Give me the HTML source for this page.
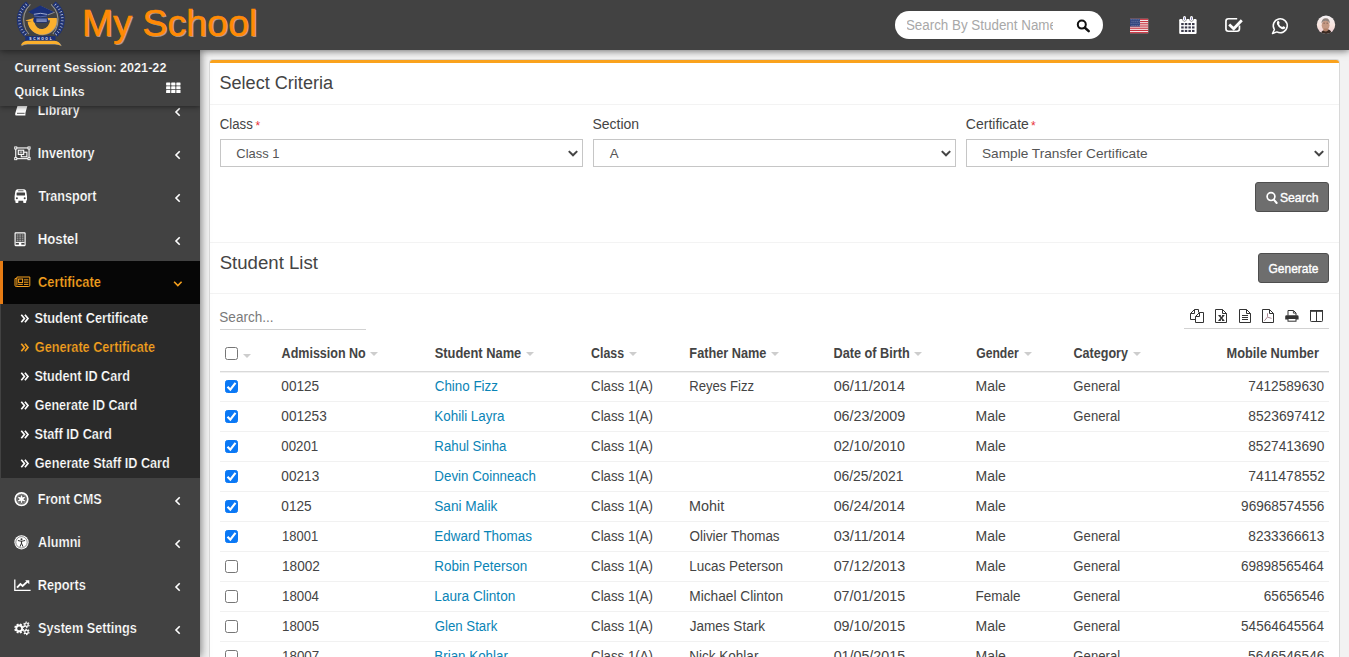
<!DOCTYPE html>
<html>
<head>
<meta charset="utf-8">
<title>Generate Certificate</title>
<style>
*{box-sizing:border-box;margin:0;padding:0}
html,body{width:1349px;height:657px;overflow:hidden}
body{font-family:"Liberation Sans",sans-serif;font-size:14px;color:#444;background:#f2f2f2;position:relative}
.tx{position:absolute;left:0;top:0;white-space:nowrap;line-height:1;transform-origin:0 0;display:block}
svg{position:absolute;overflow:visible}
/* header */
#hdr{position:absolute;left:0;top:0;width:1349px;height:50px;background:#424242;z-index:30;box-shadow:0 1px 7px rgba(0,0,0,.55)}
#title{position:absolute;left:83.3px;top:2.6px;line-height:1;font-size:35px;color:#ff8a05;letter-spacing:.85px;text-shadow:1px .6px 0 rgba(160,160,160,.8);white-space:nowrap;-webkit-text-stroke:.45px #ff8a05}
#sbox{position:absolute;left:895px;top:11px;width:208px;height:28px;border-radius:14px;background:#fff}
#sclip2{position:absolute;left:12px;top:0;width:146px;height:28px;overflow:hidden}
/* sidebar */
#side{position:absolute;left:0;top:50px;width:200px;height:607px;background:#424242;z-index:20;box-shadow:1px 0 8px rgba(0,0,0,.5)}
#sclip{position:absolute;left:0;top:0;width:200px;height:607px;overflow:hidden}
#sess{position:absolute;left:0;top:0;width:200px;height:55.5px;background:#424242;z-index:5;box-shadow:0 1px 5px rgba(0,0,0,.45)}
#act{position:absolute;left:0;top:211px;width:200px;height:43px;background:#060606;border-left:3px solid #e67c14}
#sub{position:absolute;left:1px;top:254px;width:199px;height:174px;background:#2a2a2a}
/* main */
#box{position:absolute;left:210px;top:60px;width:1129px;height:620px;background:#fff;border-top:3px solid #faa21c;border-radius:3px 3px 0 0;box-shadow:0 0 0 1px rgba(0,0,0,.095),0 0 2px rgba(0,0,0,.05)}
#main{position:absolute;left:0;top:0;width:1349px;height:657px;z-index:10}
.hl{position:absolute;left:210px;width:1129px;height:1px;background:#f3f3f3}
.star{position:absolute;color:#e8323a;font-size:12px;line-height:1;top:119.5px}
.sel{position:absolute;top:139px;width:363px;height:28px;border:1px solid #c6c6c6;background:#fff}
.btn{position:absolute;height:30px;background:#6e6e6e;border:1px solid #4e4e4e;border-radius:3px}
.ul{position:absolute;height:1px;background:#d2d2d2}
.so{position:absolute;top:352.2px;width:0;height:0;border-left:4.2px solid transparent;border-right:4.2px solid transparent;border-top:4.8px solid #cdcdcd}
.thb{position:absolute;left:220px;top:371px;width:1109px;height:2px;background:linear-gradient(#d9d9d9 50%,#f1f1f1 50%)}
.rb{position:absolute;left:220px;width:1109px;height:1px;background:#f1f1f1}
.cb{position:absolute;left:225px;width:13px;height:13px;border:1px solid #767676;border-radius:2.5px;background:#fff}
.cb.k{background:#0a78f5;border-color:#0a78f5}
.cb svg{left:-1px;top:-1px}
</style>
</head>
<body>
<div id="hdr">
<svg width="80" height="50" viewBox="0 0 80 50" style="left:0;top:0">
<path d="M30.4 4.3 Q21.5 13 24.2 25 Q25.4 30.5 28.8 34.2" fill="none" stroke="#929292" stroke-width="1.1"/>
<path d="M51.2 4.3 Q60.1 13 57.4 25 Q56.2 30.5 52.8 34.2" fill="none" stroke="#929292" stroke-width="1.1"/>
<path d="M27.6 3.4 Q16.6 12.5 20.2 26 Q21.8 31.2 26 34.8" fill="none" stroke="#1a3079" stroke-width="4.9" stroke-dasharray="2.6 .45"/>
<path d="M27.6 3.4 Q16.6 12.5 20.2 26 Q21.8 31.2 26 34.8" fill="none" stroke="#e4e9f8" stroke-width="2.6" stroke-dasharray=".7 2.35" stroke-dashoffset="-1.4" opacity=".85"/>
<path d="M54 3.4 Q65 12.5 61.4 26 Q59.8 31.2 55.6 34.8" fill="none" stroke="#1a3079" stroke-width="4.9" stroke-dasharray="2.6 .45"/>
<path d="M54 3.4 Q65 12.5 61.4 26 Q59.8 31.2 55.6 34.8" fill="none" stroke="#e4e9f8" stroke-width="2.6" stroke-dasharray=".7 2.35" stroke-dashoffset="-1.4" opacity=".85"/>
<path d="M27.6 21.5 A14.4 14 0 0 0 56.9 19.2 L56.9 18 L47 18 L47 20 L50.2 20 A8.2 9.6 0 0 1 34 22 Z" fill="#929292" transform="translate(.6 .5)"/>
<path d="M27.6 21.5 A14.4 14 0 0 0 56.7 19.2 L56.7 17.9 L47 17.9 L47 20 L50.1 20 A8.2 9.6 0 0 1 34 22 Z" fill="#fbb02d"/>
<path d="M25.5 20.4 L33.8 17.9 L33.8 22.4 Z" fill="#fbb02d"/><path d="M25.5 20.4 L27.6 19.8 L27.6 21 Z" fill="#d99a3a"/>
<rect x="33.3" y="17.6" width="14.8" height="5.2" rx="2.2" fill="#1a3079"/>
<path d="M36.4 19.1 L46.8 19.1 M36.4 20.25 L46.8 20.25 M36.4 21.4 L46.8 21.4" stroke="#cdd5ef" stroke-width=".6"/>
<path d="M40.3 5.6 L54.4 11.9 L47.5 14.8 L27.9 12.1 Z" fill="#929292" transform="translate(.8 .5)"/>
<path d="M40.3 5.5 L54.2 11.9 L47.4 14.6 L47.4 16.4 Q40.5 18.2 33.6 16.4 L33.6 14.4 L27.9 12.1 Z" fill="#1a3079"/>
<path d="M33.9 14.3 Q40.5 12.3 47.1 14.4" fill="none" stroke="#c3cce9" stroke-width=".8"/><path d="M34.2 16 Q40.5 17.5 46.8 16" fill="none" stroke="#8fa0d4" stroke-width=".5"/>
<rect x="25.3" y="36.1" width="30.2" height="4.7" fill="#1a3079"/>
<text x="30.4" y="39.7" font-family="Liberation Sans" font-weight="bold" font-size="3.3" fill="#fff" text-anchor="middle">S</text>
<text x="34.449999999999996" y="39.7" font-family="Liberation Sans" font-weight="bold" font-size="3.3" fill="#fff" text-anchor="middle">C</text>
<text x="38.5" y="39.7" font-family="Liberation Sans" font-weight="bold" font-size="3.3" fill="#fff" text-anchor="middle">H</text>
<text x="42.55" y="39.7" font-family="Liberation Sans" font-weight="bold" font-size="3.3" fill="#fff" text-anchor="middle">O</text>
<text x="46.599999999999994" y="39.7" font-family="Liberation Sans" font-weight="bold" font-size="3.3" fill="#fff" text-anchor="middle">O</text>
<text x="50.65" y="39.7" font-family="Liberation Sans" font-weight="bold" font-size="3.3" fill="#fff" text-anchor="middle">L</text>
<path d="M20.8 45.9 Q22 41.2 27 40.8 L54.4 40.8 Q59.4 41.2 61 45.9 Q58.6 44.2 54.4 44.2 L27 44.2 Q22.8 44.2 20.8 45.9 Z" fill="#929292" transform="translate(.8 .4)"/>
<path d="M20.8 45.7 Q22 41.1 27 40.7 L54.4 40.7 Q59.4 41.1 60.9 45.7 Q58.6 44 54.4 44 L27 44 Q22.8 44 20.8 45.7 Z" fill="#fbb02d"/>
</svg>
<span class="tx" style="font-size:36.5px;color:#ff8a05;transform:translate(81.96px,6px) scaleX(1.0297);-webkit-text-stroke:0.680px #ff8a05;text-shadow:1.1px .7px 0 rgba(165,165,165,.85)">My School</span>
  <div id="sbox"><div id="sclip2">
<span class="tx" style="font-size:14px;color:#a8a8a8;transform:translate(-1.09px,7px) scaleX(0.9560)">Search By Student Name</span>
</div></div>
<svg width="1349" height="50" viewBox="0 0 1349 50" style="left:0;top:0">
<circle cx="1081.8" cy="24.6" r="4" fill="none" stroke="#111" stroke-width="2"/><line x1="1084.9" y1="27.7" x2="1088.7" y2="31.1" stroke="#111" stroke-width="2.5" stroke-linecap="round"/>
<rect x="1130" y="18.8" width="18.2" height="14.4" fill="#f4e9ea"/>
<rect x="1130" y="18.80" width="18.2" height="1.11" fill="#c8303c"/>
<rect x="1130" y="21.02" width="18.2" height="1.11" fill="#c8303c"/>
<rect x="1130" y="23.23" width="18.2" height="1.11" fill="#c8303c"/>
<rect x="1130" y="25.45" width="18.2" height="1.11" fill="#c8303c"/>
<rect x="1130" y="27.66" width="18.2" height="1.11" fill="#c8303c"/>
<rect x="1130" y="29.88" width="18.2" height="1.11" fill="#c8303c"/>
<rect x="1130" y="32.09" width="18.2" height="1.11" fill="#c8303c"/>
<rect x="1130" y="18.8" width="10" height="7.75" fill="#33467f"/>
<circle cx="1131.10" cy="19.80" r=".45" fill="#aab3d0"/>
<circle cx="1133.05" cy="19.80" r=".45" fill="#aab3d0"/>
<circle cx="1135.00" cy="19.80" r=".45" fill="#aab3d0"/>
<circle cx="1136.95" cy="19.80" r=".45" fill="#aab3d0"/>
<circle cx="1138.90" cy="19.80" r=".45" fill="#aab3d0"/>
<circle cx="1132.00" cy="21.70" r=".45" fill="#aab3d0"/>
<circle cx="1133.95" cy="21.70" r=".45" fill="#aab3d0"/>
<circle cx="1135.90" cy="21.70" r=".45" fill="#aab3d0"/>
<circle cx="1137.85" cy="21.70" r=".45" fill="#aab3d0"/>
<circle cx="1139.80" cy="21.70" r=".45" fill="#aab3d0"/>
<circle cx="1131.10" cy="23.60" r=".45" fill="#aab3d0"/>
<circle cx="1133.05" cy="23.60" r=".45" fill="#aab3d0"/>
<circle cx="1135.00" cy="23.60" r=".45" fill="#aab3d0"/>
<circle cx="1136.95" cy="23.60" r=".45" fill="#aab3d0"/>
<circle cx="1138.90" cy="23.60" r=".45" fill="#aab3d0"/>
<circle cx="1132.00" cy="25.50" r=".45" fill="#aab3d0"/>
<circle cx="1133.95" cy="25.50" r=".45" fill="#aab3d0"/>
<circle cx="1135.90" cy="25.50" r=".45" fill="#aab3d0"/>
<circle cx="1137.85" cy="25.50" r=".45" fill="#aab3d0"/>
<circle cx="1139.80" cy="25.50" r=".45" fill="#aab3d0"/>
<path d="M1180.4 19 L1195.4 19 Q1196.6 19 1196.6 20.2 L1196.6 32.8 Q1196.6 34 1195.4 34 L1180.4 34 Q1179.2 34 1179.2 32.8 L1179.2 20.2 Q1179.2 19 1180.4 19 Z" fill="#fff"/>
<rect x="1182.45" y="15.4" width="4.1" height="6.2" rx="2" fill="#424242"/><rect x="1183" y="15.9" width="3" height="5.2" rx="1.5" fill="#fff"/><rect x="1184.05" y="17" width=".9" height="3" rx=".4" fill="#7a7ab8"/>
<rect x="1189.45" y="15.4" width="4.1" height="6.2" rx="2" fill="#424242"/><rect x="1190" y="15.9" width="3" height="5.2" rx="1.5" fill="#fff"/><rect x="1191.05" y="17" width=".9" height="3" rx=".4" fill="#7a7ab8"/>
<rect x="1181.2" y="23" width="2.5" height="2.1" fill="#3c3c4c"/>
<rect x="1184.8" y="23" width="2.5" height="2.1" fill="#3c3c4c"/>
<rect x="1188.4" y="23" width="2.5" height="2.1" fill="#3c3c4c"/>
<rect x="1192" y="23" width="2.5" height="2.1" fill="#3c3c4c"/>
<rect x="1181.2" y="26.4" width="2.5" height="2.1" fill="#3c3c4c"/>
<rect x="1184.8" y="26.4" width="2.5" height="2.1" fill="#3c3c4c"/>
<rect x="1188.4" y="26.4" width="2.5" height="2.1" fill="#3c3c4c"/>
<rect x="1192" y="26.4" width="2.5" height="2.1" fill="#3c3c4c"/>
<rect x="1181.2" y="29.9" width="2.5" height="2.1" fill="#3c3c4c"/>
<rect x="1184.8" y="29.9" width="2.5" height="2.1" fill="#3c3c4c"/>
<rect x="1188.4" y="29.9" width="2.5" height="2.1" fill="#3c3c4c"/>
<rect x="1192" y="29.9" width="2.5" height="2.1" fill="#3c3c4c"/>
<path d="M1237.2 18.75 L1228.4 18.75 Q1225.95 18.75 1225.95 21.2 L1225.95 28.8 Q1225.95 31.25 1228.4 31.25 L1237 31.25 Q1239.45 31.25 1239.45 28.8 L1239.45 25.6" fill="none" stroke="#fff" stroke-width="1.7"/>
<polyline points="1229.2,24.4 1233.7,28.7 1241.8,20.2" fill="none" stroke="#fff" stroke-width="2.8"/>
<path d="M1274.4 29.6 A7 7 0 1 1 1276.9 31.9 L1272.5 33.5 Z" fill="none" stroke="#fff" stroke-width="1.5" stroke-linejoin="round"/>
<path d="M1277.4 21.2 Q1278.3 20.3 1279 21.4 L1279.6 22.7 Q1279.7 23.3 1279 23.9 Q1279.9 26.2 1282.3 27 Q1283 26 1283.6 26.2 L1285 26.9 Q1285.6 27.4 1284.9 28.4 Q1283.6 29.6 1281.6 28.9 Q1278.3 27.6 1277 24.2 Q1276.5 22.3 1277.4 21.2 Z" fill="#fff"/>
<defs><clipPath id="av"><circle cx="1326" cy="24.8" r="9.2"/></clipPath><linearGradient id="avg" x1="0" y1="0" x2="0" y2="1"><stop offset="0" stop-color="#f4f2f6"/><stop offset=".55" stop-color="#f8e3dc"/><stop offset=".8" stop-color="#f1d3d6"/><stop offset="1" stop-color="#b8d4e4"/></linearGradient></defs>
<g clip-path="url(#av)"><rect x="1316" y="15" width="20" height="20" fill="url(#avg)"/><path d="M1320.5 35 Q1321 30.6 1324.4 30 L1328.4 29.6 Q1331.6 30.4 1332 35 Z" fill="#3a2a22"/><ellipse cx="1325.6" cy="25.2" rx="3.9" ry="4.9" fill="#c49883"/><path d="M1321.5 23.6 Q1321.4 18.4 1325.8 18.3 Q1330 18.4 1329.8 23.6 Q1328.6 20.6 1325.6 20.8 Q1322.6 20.6 1321.5 23.6 Z" fill="#8d817c"/><path d="M1323.4 23.2 L1324.9 23.2 M1326.5 23.2 L1328 23.2" stroke="#6a5048" stroke-width=".7"/><path d="M1323.2 30.4 Q1325.6 32.6 1328.2 30.2 L1327.6 28.6 L1323.8 28.6 Z" fill="#b08068"/></g>
</svg>
</div>
<div id="side">
 <div id="sclip">
  <div id="sess">
<span class="tx" style="font-size:13px;color:#fff;transform:translate(14.49px,11px) scaleX(0.9736);font-weight:bold;-webkit-text-stroke:0.226px #424242">Current Session: 2021-22</span>
<span class="tx" style="font-size:13px;color:#fff;transform:translate(14.50px,35px) scaleX(0.9527);font-weight:bold;-webkit-text-stroke:0.231px #424242">Quick Links</span>
<svg width="200" height="56" viewBox="0 50 200 56" style="left:0;top:0">
<rect x="166.1" y="82.5" width="4.2" height="3" rx=".4" fill="#fff"/>
<rect x="166.1" y="86.3" width="4.2" height="3" rx=".4" fill="#fff"/>
<rect x="166.1" y="90.1" width="4.2" height="3" rx=".4" fill="#fff"/>
<rect x="171.2" y="82.5" width="4.2" height="3" rx=".4" fill="#fff"/>
<rect x="171.2" y="86.3" width="4.2" height="3" rx=".4" fill="#fff"/>
<rect x="171.2" y="90.1" width="4.2" height="3" rx=".4" fill="#fff"/>
<rect x="176.3" y="82.5" width="4.2" height="3" rx=".4" fill="#fff"/>
<rect x="176.3" y="86.3" width="4.2" height="3" rx=".4" fill="#fff"/>
<rect x="176.3" y="90.1" width="4.2" height="3" rx=".4" fill="#fff"/>
</svg>
  </div>
  <div id="act"></div>
  <div id="sub"></div>
<span class="tx" style="font-size:14px;color:#fff;transform:translate(37.72px,53px) scaleX(0.8798);font-weight:bold;-webkit-text-stroke:0.250px #424242">Library</span>
<span class="tx" style="font-size:14px;color:#fff;transform:translate(37.72px,96px) scaleX(0.8999);font-weight:bold;-webkit-text-stroke:0.244px #424242">Inventory</span>
<span class="tx" style="font-size:14px;color:#fff;transform:translate(38.40px,139px) scaleX(0.8990);font-weight:bold;-webkit-text-stroke:0.245px #424242">Transport</span>
<span class="tx" style="font-size:14px;color:#fff;transform:translate(37.65px,182px) scaleX(0.9448);font-weight:bold;-webkit-text-stroke:0.233px #424242">Hostel</span>
<span class="tx" style="font-size:14px;color:#f5a01e;transform:translate(37.99px,225px) scaleX(0.9185);font-weight:bold;-webkit-text-stroke:0.240px #060606">Certificate</span>
<span class="tx" style="font-size:14px;color:#fff;transform:translate(37.66px,442px) scaleX(0.9040);font-weight:bold;-webkit-text-stroke:0.243px #424242">Front CMS</span>
<span class="tx" style="font-size:14px;color:#fff;transform:translate(38.09px,485px) scaleX(0.9012);font-weight:bold;-webkit-text-stroke:0.244px #424242">Alumni</span>
<span class="tx" style="font-size:14px;color:#fff;transform:translate(37.66px,528px) scaleX(0.9118);font-weight:bold;-webkit-text-stroke:0.241px #424242">Reports</span>
<span class="tx" style="font-size:14px;color:#fff;transform:translate(38.04px,571px) scaleX(0.9070);font-weight:bold;-webkit-text-stroke:0.243px #424242">System Settings</span>
<span class="tx" style="font-size:14px;color:#fff;transform:translate(34.46px,261px) scaleX(0.9141);font-weight:bold;-webkit-text-stroke:0.241px #2a2a2a">Student Certificate</span>
<span class="tx" style="font-size:14px;color:#f5a01e;transform:translate(34.78px,290px) scaleX(0.9041);font-weight:bold;-webkit-text-stroke:0.243px #2a2a2a">Generate Certificate</span>
<span class="tx" style="font-size:14px;color:#fff;transform:translate(34.45px,319px) scaleX(0.9020);font-weight:bold;-webkit-text-stroke:0.244px #2a2a2a">Student ID Card</span>
<span class="tx" style="font-size:14px;color:#fff;transform:translate(34.74px,348px) scaleX(0.8949);font-weight:bold;-webkit-text-stroke:0.246px #2a2a2a">Generate ID Card</span>
<span class="tx" style="font-size:14px;color:#fff;transform:translate(34.39px,377px) scaleX(0.9122);font-weight:bold;-webkit-text-stroke:0.241px #2a2a2a">Staff ID Card</span>
<span class="tx" style="font-size:14px;color:#fff;transform:translate(34.78px,406px) scaleX(0.9034);font-weight:bold;-webkit-text-stroke:0.244px #2a2a2a">Generate Staff ID Card</span>
<svg width="200" height="607" viewBox="0 50 200 607" style="left:0;top:0">
<polyline points="179.7,108.3 176,112.0 179.7,115.7" fill="none" stroke="#fff" stroke-width="1.6"/>
<polyline points="179.7,151.3 176,155.0 179.7,158.7" fill="none" stroke="#fff" stroke-width="1.6"/>
<polyline points="179.7,194.3 176,198.0 179.7,201.7" fill="none" stroke="#fff" stroke-width="1.6"/>
<polyline points="179.7,237.3 176,241.0 179.7,244.7" fill="none" stroke="#fff" stroke-width="1.6"/>
<polyline points="179.7,497.3 176,501.0 179.7,504.7" fill="none" stroke="#fff" stroke-width="1.6"/>
<polyline points="179.7,540.3 176,544.0 179.7,547.7" fill="none" stroke="#fff" stroke-width="1.6"/>
<polyline points="179.7,583.3 176,587.0 179.7,590.7" fill="none" stroke="#fff" stroke-width="1.6"/>
<polyline points="179.7,626.3 176,630.0 179.7,633.7" fill="none" stroke="#fff" stroke-width="1.6"/>
<polyline points="174.1,281.7 177.85,285.5 181.6,281.7" fill="none" stroke="#f5a01e" stroke-width="1.6"/>
<polyline points="21.3,314.8 24.4,318.5 21.3,322.2" fill="none" stroke="#fff" stroke-width="1.7"/>
<polyline points="24.9,314.8 28.0,318.5 24.9,322.2" fill="none" stroke="#fff" stroke-width="1.7"/>
<polyline points="21.3,343.8 24.4,347.5 21.3,351.2" fill="none" stroke="#f5a01e" stroke-width="1.7"/>
<polyline points="24.9,343.8 28.0,347.5 24.9,351.2" fill="none" stroke="#f5a01e" stroke-width="1.7"/>
<polyline points="21.3,372.8 24.4,376.5 21.3,380.2" fill="none" stroke="#fff" stroke-width="1.7"/>
<polyline points="24.9,372.8 28.0,376.5 24.9,380.2" fill="none" stroke="#fff" stroke-width="1.7"/>
<polyline points="21.3,401.8 24.4,405.5 21.3,409.2" fill="none" stroke="#fff" stroke-width="1.7"/>
<polyline points="24.9,401.8 28.0,405.5 24.9,409.2" fill="none" stroke="#fff" stroke-width="1.7"/>
<polyline points="21.3,430.8 24.4,434.5 21.3,438.2" fill="none" stroke="#fff" stroke-width="1.7"/>
<polyline points="24.9,430.8 28.0,434.5 24.9,438.2" fill="none" stroke="#fff" stroke-width="1.7"/>
<polyline points="21.3,459.8 24.4,463.5 21.3,467.2" fill="none" stroke="#fff" stroke-width="1.7"/>
<polyline points="24.9,459.8 28.0,463.5 24.9,467.2" fill="none" stroke="#fff" stroke-width="1.7"/>
<path d="M18.2 103.5 L28 103.5 L25.4 113 L25.4 115.6 L16.6 115.6 Q14.6 115.6 15.2 113.4 Z" fill="#fff"/><path d="M17 113.3 L24.6 113.3" stroke="#424242" stroke-width=".9"/>
<rect x="15.75" y="147.95" width="13.3" height="10.7" fill="none" stroke="#fff" stroke-width="1.1"/>
<rect x="14.7" y="146.89999999999998" width="2.1" height="2.1" fill="#424242" stroke="#fff" stroke-width=".9"/>
<rect x="28.0" y="146.89999999999998" width="2.1" height="2.1" fill="#424242" stroke="#fff" stroke-width=".9"/>
<rect x="14.7" y="157.6" width="2.1" height="2.1" fill="#424242" stroke="#fff" stroke-width=".9"/>
<rect x="28.0" y="157.6" width="2.1" height="2.1" fill="#424242" stroke="#fff" stroke-width=".9"/>
<rect x="21.3" y="152.2" width="5.6" height="4.6" fill="none" stroke="#fff" stroke-width="1.1"/>
<rect x="18.3" y="150.2" width="5.4" height="4.2" fill="#424242" stroke="#fff" stroke-width="1.1"/>
<rect x="19.6" y="151.3" width="2.8" height="2" fill="#fff" opacity=".55"/>
<path d="M17.4 189.3 L24.2 189.3 Q26 189.6 26.3 191.4 L27 196.2 L27 200.6 L26.2 200.6 L26.2 202.2 Q26.2 203 25.4 203 L24 203 Q23.2 203 23.2 202.2 L23.2 200.8 L18.4 200.8 L18.4 202.2 Q18.4 203 17.6 203 L16.2 203 Q15.4 203 15.4 202.2 L15.4 200.6 L14.6 200.6 L14.6 196.2 L15.3 191.4 Q15.6 189.6 17.4 189.3 Z" fill="#fff"/>
<rect x="16.6" y="192.4" width="8.4" height="3.2" rx=".5" fill="#424242"/><rect x="18" y="190.3" width="5.6" height="1" rx=".5" fill="#424242" opacity=".8"/>
<circle cx="16.9" cy="198.2" r="1" fill="#424242"/><circle cx="24.7" cy="198.2" r="1" fill="#424242"/>
<rect x="15.1" y="232.8" width="10" height="12.8" rx=".5" fill="none" stroke="#fff" stroke-width="1.15"/>
<rect x="16.7" y="234.4" width="1.8" height="1.2" fill="#fff" opacity=".5"/>
<rect x="19.2" y="234.4" width="1.8" height="1.2" fill="#fff" opacity=".5"/>
<rect x="21.7" y="234.4" width="1.8" height="1.2" fill="#fff" opacity=".5"/>
<rect x="16.7" y="236.3" width="1.8" height="1.2" fill="#fff" opacity=".5"/>
<rect x="19.2" y="236.3" width="1.8" height="1.2" fill="#fff" opacity=".5"/>
<rect x="21.7" y="236.3" width="1.8" height="1.2" fill="#fff" opacity=".5"/>
<rect x="16.7" y="238.2" width="1.8" height="1.2" fill="#fff" opacity=".5"/>
<rect x="19.2" y="238.2" width="1.8" height="1.2" fill="#fff" opacity=".5"/>
<rect x="21.7" y="238.2" width="1.8" height="1.2" fill="#fff" opacity=".5"/>
<rect x="16.7" y="240.1" width="1.8" height="1.2" fill="#fff" opacity=".5"/>
<rect x="19.2" y="240.1" width="1.8" height="1.2" fill="#fff" opacity=".5"/>
<rect x="21.7" y="240.1" width="1.8" height="1.2" fill="#fff" opacity=".5"/>
<rect x="15.6" y="241.9" width="9" height="1" fill="#fff"/><rect x="18.9" y="242.4" width="2.4" height="3" fill="#fff"/><rect x="15.6" y="244.4" width="9" height=".8" fill="#fff" opacity=".6"/>
<path d="M16.9 277 L29.8 277 L29.8 285.3 Q29.8 286.5 28.6 286.5 L16.2 286.5 Q15 286.5 15 285.3 L15 278.6 L16.9 278.6" fill="none" stroke="#f5a01e" stroke-width="1"/><path d="M16.9 277 L16.9 285.6" stroke="#f5a01e" stroke-width="1"/>
<rect x="18.6" y="279" width="4" height="3.6" fill="none" stroke="#f5a01e" stroke-width="1"/><rect x="19.7" y="280" width="1.8" height="1.6" fill="#060606"/>
<path d="M24 279.4 L28.4 279.4 M24 281 L28.4 281 M24 282.5 L28.4 282.5" stroke="#f5a01e" stroke-width=".9" opacity=".8"/><path d="M18.2 284.4 L22.8 284.4 M24 284.4 L28.4 284.4" stroke="#f5a01e" stroke-width="1"/>
<circle cx="21.5" cy="499.1" r="6.3" fill="none" stroke="#fff" stroke-width="1.7"/><circle cx="21.5" cy="499.1" r="5.1" fill="#fff" opacity=".4"/>
<polygon points="25.40,501.35 21.50,503.60 17.60,501.35 17.60,496.85 21.50,494.60 25.40,496.85" fill="#424242"/>
<line x1="21.50" y1="495.40" x2="21.50" y2="502.80" stroke="#fff" stroke-width="1.6"/>
<line x1="24.70" y1="497.25" x2="18.30" y2="500.95" stroke="#fff" stroke-width="1.6"/>
<line x1="24.70" y1="500.95" x2="18.30" y2="497.25" stroke="#fff" stroke-width="1.6"/>
<circle cx="21.5" cy="499.1" r="1.8" fill="#fff"/>
<circle cx="21.5" cy="542.3" r="7.1" fill="#fff"/><circle cx="21.5" cy="542.3" r="5.7" fill="none" stroke="#424242" stroke-width=".6"/>
<circle cx="21.5" cy="539.2" r="1" fill="#333"/><path d="M18.3 540.6 L21.5 541.3 L24.7 540.6 M21.5 541.3 L21.5 543.4 M21.5 543.2 L20.1 546.4 M21.5 543.2 L22.9 546.4" stroke="#333" stroke-width="1" fill="none" stroke-linecap="round"/>
<path d="M14.8 579.4 L14.8 590.4 L30.6 590.4" fill="none" stroke="#fff" stroke-width="1.3"/><path d="M17 587.6 L20.4 584 L22.6 586 L27.6 581.4" fill="none" stroke="#fff" stroke-width="1.9"/><path d="M25.2 580.2 L29.3 580.2 L29.3 584.3 Z" fill="#fff"/>
<line x1="22.43" y1="629.74" x2="23.82" y2="630.31" stroke="#fff" stroke-width="2.0"/>
<line x1="20.54" y1="631.63" x2="21.11" y2="633.02" stroke="#fff" stroke-width="2.0"/>
<line x1="17.86" y1="631.63" x2="17.29" y2="633.02" stroke="#fff" stroke-width="2.0"/>
<line x1="15.97" y1="629.74" x2="14.58" y2="630.31" stroke="#fff" stroke-width="2.0"/>
<line x1="15.97" y1="627.06" x2="14.58" y2="626.49" stroke="#fff" stroke-width="2.0"/>
<line x1="17.86" y1="625.17" x2="17.29" y2="623.78" stroke="#fff" stroke-width="2.0"/>
<line x1="20.54" y1="625.17" x2="21.11" y2="623.78" stroke="#fff" stroke-width="2.0"/>
<line x1="22.43" y1="627.06" x2="23.82" y2="626.49" stroke="#fff" stroke-width="2.0"/>
<circle cx="19.2" cy="628.4" r="3.80" fill="#fff"/><circle cx="19.2" cy="628.4" r="1.9" fill="#424242"/>
<line x1="28.35" y1="625.47" x2="29.46" y2="625.92" stroke="#fff" stroke-width="1.5"/>
<line x1="26.76" y1="626.68" x2="26.92" y2="627.87" stroke="#fff" stroke-width="1.5"/>
<line x1="24.91" y1="625.92" x2="23.96" y2="626.65" stroke="#fff" stroke-width="1.5"/>
<line x1="24.65" y1="623.93" x2="23.54" y2="623.48" stroke="#fff" stroke-width="1.5"/>
<line x1="26.24" y1="622.72" x2="26.08" y2="621.53" stroke="#fff" stroke-width="1.5"/>
<line x1="28.09" y1="623.48" x2="29.04" y2="622.75" stroke="#fff" stroke-width="1.5"/>
<circle cx="26.5" cy="624.7" r="2.30" fill="#fff"/><circle cx="26.5" cy="624.7" r="1.1" fill="#424242"/>
<line x1="28.35" y1="632.67" x2="29.46" y2="633.12" stroke="#fff" stroke-width="1.5"/>
<line x1="26.76" y1="633.88" x2="26.92" y2="635.07" stroke="#fff" stroke-width="1.5"/>
<line x1="24.91" y1="633.12" x2="23.96" y2="633.85" stroke="#fff" stroke-width="1.5"/>
<line x1="24.65" y1="631.13" x2="23.54" y2="630.68" stroke="#fff" stroke-width="1.5"/>
<line x1="26.24" y1="629.92" x2="26.08" y2="628.73" stroke="#fff" stroke-width="1.5"/>
<line x1="28.09" y1="630.68" x2="29.04" y2="629.95" stroke="#fff" stroke-width="1.5"/>
<circle cx="26.5" cy="631.9" r="2.30" fill="#fff"/><circle cx="26.5" cy="631.9" r="1.1" fill="#424242"/>
</svg>
 </div>
</div>
<div id="box"></div>
<div id="main">
  <div class="hl" style="top:104px"></div>
  <div class="hl" style="top:242px"></div>
  <div class="hl" style="top:293px"></div>
  <span class="star" style="left:255.5px">*</span>
  <span class="star" style="left:1031px">*</span>
  <div class="sel" style="left:220px"></div>
  <div class="sel" style="left:593px"></div>
  <div class="sel" style="left:966px"></div>
  <div class="btn" style="left:1255px;top:182px;width:74px"></div>
  <div class="btn" style="left:1258px;top:253px;width:71px"></div>
  <div class="ul" style="left:220px;top:329px;width:146px"></div>
  <div class="ul" style="left:1184px;top:328px;width:145px"></div>
<i class="so" style="left:370.2px"></i>
<i class="so" style="left:525.8px"></i>
<i class="so" style="left:628.7px"></i>
<i class="so" style="left:771.1px"></i>
<i class="so" style="left:914.0px"></i>
<i class="so" style="left:1023.6px"></i>
<i class="so" style="left:1132.8px"></i>
<i class="so" style="left:243px;top:353.9px"></i>
<div class="thb"></div>
<div class="rb" style="top:401px"></div>
<div class="cb k" style="top:380px"><svg width="13" height="13" viewBox="0 0 13 13"><path d="M2.5 6.8 L5.3 9.6 L10.5 2.8" fill="none" stroke="#fff" stroke-width="2.2"/></svg></div>
<div class="rb" style="top:431px"></div>
<div class="cb k" style="top:410px"><svg width="13" height="13" viewBox="0 0 13 13"><path d="M2.5 6.8 L5.3 9.6 L10.5 2.8" fill="none" stroke="#fff" stroke-width="2.2"/></svg></div>
<div class="rb" style="top:461px"></div>
<div class="cb k" style="top:440px"><svg width="13" height="13" viewBox="0 0 13 13"><path d="M2.5 6.8 L5.3 9.6 L10.5 2.8" fill="none" stroke="#fff" stroke-width="2.2"/></svg></div>
<div class="rb" style="top:491px"></div>
<div class="cb k" style="top:470px"><svg width="13" height="13" viewBox="0 0 13 13"><path d="M2.5 6.8 L5.3 9.6 L10.5 2.8" fill="none" stroke="#fff" stroke-width="2.2"/></svg></div>
<div class="rb" style="top:521px"></div>
<div class="cb k" style="top:500px"><svg width="13" height="13" viewBox="0 0 13 13"><path d="M2.5 6.8 L5.3 9.6 L10.5 2.8" fill="none" stroke="#fff" stroke-width="2.2"/></svg></div>
<div class="rb" style="top:551px"></div>
<div class="cb k" style="top:530px"><svg width="13" height="13" viewBox="0 0 13 13"><path d="M2.5 6.8 L5.3 9.6 L10.5 2.8" fill="none" stroke="#fff" stroke-width="2.2"/></svg></div>
<div class="rb" style="top:581px"></div>
<div class="cb" style="top:560px"></div>
<div class="rb" style="top:611px"></div>
<div class="cb" style="top:590px"></div>
<div class="rb" style="top:641px"></div>
<div class="cb" style="top:620px"></div>
<div class="rb" style="top:671px"></div>
<div class="cb" style="top:650px"></div>
<div class="cb" style="top:347px"></div>
<svg width="1349" height="657" viewBox="0 0 1349 657" style="left:0;top:0">
<polyline points="568.8,151.1 573,155.3 577.2,151.1" fill="none" stroke="#444" stroke-width="2"/>
<polyline points="941.8,151.1 946,155.3 950.2,151.1" fill="none" stroke="#444" stroke-width="2"/>
<polyline points="1314.8,151.1 1319,155.3 1323.2,151.1" fill="none" stroke="#444" stroke-width="2"/>
<circle cx="1271" cy="196.6" r="3.9" fill="none" stroke="#fff" stroke-width="1.7"/><line x1="1274" y1="199.8" x2="1276.7" y2="203" stroke="#fff" stroke-width="2" stroke-linecap="round"/>
<path d="M1194.5 309.5 L1198.5 309.5 L1198.5 312.5 M1195.5 319.5 L1190.5 319.5 L1190.5 313.5 L1194.5 309.5 L1194.5 313.5 L1190.5 313.5" fill="none" stroke="#333" stroke-width="1"/>
<path d="M1199.5 312.5 L1203.5 312.5 L1203.5 322.5 L1195.5 322.5 L1195.5 316.5 L1199.5 312.5 L1199.5 316.5 L1195.5 316.5" fill="#fff" stroke="#333" stroke-width="1"/>
<path d="M1222.5 309.5 L1215.5 309.5 L1215.5 322.5 L1226.5 322.5 L1226.5 313.5 L1222.5 309.5 L1222.5 313.5 L1226.5 313.5" fill="none" stroke="#333" stroke-width="1"/>
<path d="M1219.2 315.5 L1223.6 320.5 M1223.6 315.5 L1219.2 320.5" stroke="#333" stroke-width="1.4"/><path d="M1218.4 315.5 L1220.8 315.5 M1222 315.5 L1224.4 315.5 M1218.4 320.5 L1220.8 320.5 M1222 320.5 L1224.4 320.5" stroke="#333" stroke-width="1"/>
<path d="M1246.5 309.5 L1239.5 309.5 L1239.5 322.5 L1250.5 322.5 L1250.5 313.5 L1246.5 309.5 L1246.5 313.5 L1250.5 313.5" fill="none" stroke="#333" stroke-width="1"/>
<path d="M1242 315.5 L1248 315.5 M1242 317.5 L1248 317.5 M1242 319.5 L1248 319.5" stroke="#333" stroke-width="1"/>
<path d="M1269.5 309.5 L1262.5 309.5 L1262.5 322.5 L1273.5 322.5 L1273.5 313.5 L1269.5 309.5 L1269.5 313.5 L1273.5 313.5" fill="none" stroke="#333" stroke-width="1"/>
<path d="M1267.5 313.3 L1267.5 316.8 M1267.5 317 L1264.4 320.8 M1267.8 317.2 L1271.6 318.4" stroke="#8a5a6a" stroke-width=".8" fill="none" opacity=".9"/>
<path d="M1288 315.6 L1288 310.5 L1293.5 310.5 L1296 313 L1296 315.6" fill="none" stroke="#333" stroke-width="1"/><path d="M1293.4 310.8 L1293.4 313.1 L1295.8 313.1" fill="none" stroke="#333" stroke-width=".9"/>
<path d="M1286.6 315.3 L1297.2 315.3 Q1298.6 315.3 1298.6 316.7 L1298.6 319.6 L1285.2 319.6 L1285.2 316.7 Q1285.2 315.3 1286.6 315.3 Z" fill="#333"/>
<rect x="1288" y="318.5" width="8" height="2.7" fill="#fff" stroke="#333" stroke-width="1"/>
<rect x="1310.5" y="310.5" width="12" height="11" rx=".8" fill="none" stroke="#333" stroke-width="1"/><rect x="1310" y="310" width="13" height="1.8" fill="#333"/><line x1="1316.5" y1="311" x2="1316.5" y2="321" stroke="#333" stroke-width="1"/>
</svg>
<span class="tx" style="font-size:18px;color:#444;transform:translate(219.48px,74px) scaleX(1.0047)">Select Criteria</span>
<span class="tx" style="font-size:14px;color:#444;transform:translate(219.85px,117px) scaleX(0.9413)">Class</span>
<span class="tx" style="font-size:14px;color:#444;transform:translate(592.44px,117px) scaleX(0.9994)">Section</span>
<span class="tx" style="font-size:14px;color:#444;transform:translate(965.86px,117px) scaleX(0.9987)">Certificate</span>
<span class="tx" style="font-size:13px;color:#555;transform:translate(236.33px,147px) scaleX(0.9954)">Class 1</span>
<span class="tx" style="font-size:13px;color:#555;transform:translate(609.69px,147px) scaleX(1.0217)">A</span>
<span class="tx" style="font-size:13px;color:#555;transform:translate(981.95px,147px) scaleX(1.0515)">Sample Transfer Certificate</span>
<span class="tx" style="font-size:13px;color:#fff;transform:translate(1279.89px,191px) scaleX(0.9382);-webkit-text-stroke:0.373px #fff">Search</span>
<span class="tx" style="font-size:18px;color:#444;transform:translate(219.64px,254px) scaleX(1.0343)">Student List</span>
<span class="tx" style="font-size:13px;color:#fff;transform:translate(1268.56px,262px) scaleX(0.9204);-webkit-text-stroke:0.380px #fff">Generate</span>
<span class="tx" style="font-size:14px;color:#7a7a7a;transform:translate(219.35px,310px) scaleX(0.9664)">Search...</span>
<span class="tx" style="font-size:14px;color:#444;transform:translate(281.59px,346px) scaleX(0.8941);font-weight:bold">Admission No</span>
<span class="tx" style="font-size:14px;color:#444;transform:translate(434.76px,346px) scaleX(0.9186);font-weight:bold">Student Name</span>
<span class="tx" style="font-size:14px;color:#444;transform:translate(591.09px,346px) scaleX(0.8821);font-weight:bold">Class</span>
<span class="tx" style="font-size:14px;color:#444;transform:translate(689.36px,346px) scaleX(0.9084);font-weight:bold">Father Name</span>
<span class="tx" style="font-size:14px;color:#444;transform:translate(833.48px,346px) scaleX(0.9073);font-weight:bold">Date of Birth</span>
<span class="tx" style="font-size:14px;color:#444;transform:translate(976.20px,346px) scaleX(0.8692);font-weight:bold">Gender</span>
<span class="tx" style="font-size:14px;color:#444;transform:translate(1073.49px,346px) scaleX(0.8974);font-weight:bold">Category</span>
<span class="tx" style="font-size:14px;color:#444;transform:translate(1226.55px,346px) scaleX(0.9129);font-weight:bold">Mobile Number</span>
<span class="tx" style="font-size:14px;color:#444;transform:translate(281.36px,379px) scaleX(0.9715)">00125</span>
<span class="tx" style="font-size:14px;color:#0a84b6;transform:translate(434.74px,379px) scaleX(0.9563)">Chino Fizz</span>
<span class="tx" style="font-size:14px;color:#444;transform:translate(591.06px,379px) scaleX(0.9484)">Class 1(A)</span>
<span class="tx" style="font-size:14px;color:#444;transform:translate(689.21px,379px) scaleX(0.9366)">Reyes Fizz</span>
<span class="tx" style="font-size:14px;color:#444;transform:translate(833.65px,379px) scaleX(1.0327)">06/11/2014</span>
<span class="tx" style="font-size:14px;color:#444;transform:translate(975.45px,379px) scaleX(1.0016)">Male</span>
<span class="tx" style="font-size:14px;color:#444;transform:translate(1073.37px,379px) scaleX(0.9386)">General</span>
<span class="tx" style="font-size:14px;color:#444;transform:translate(1248.36px,379px) scaleX(0.9738)">7412589630</span>
<span class="tx" style="font-size:14px;color:#444;transform:translate(281.34px,409px) scaleX(0.9718)">001253</span>
<span class="tx" style="font-size:14px;color:#0a84b6;transform:translate(434.34px,409px) scaleX(0.9579)">Kohili Layra</span>
<span class="tx" style="font-size:14px;color:#444;transform:translate(591.06px,409px) scaleX(0.9484)">Class 1(A)</span>
<span class="tx" style="font-size:14px;color:#444;transform:translate(833.65px,409px) scaleX(1.0207)">06/23/2009</span>
<span class="tx" style="font-size:14px;color:#444;transform:translate(975.45px,409px) scaleX(1.0016)">Male</span>
<span class="tx" style="font-size:14px;color:#444;transform:translate(1073.37px,409px) scaleX(0.9386)">General</span>
<span class="tx" style="font-size:14px;color:#444;transform:translate(1248.28px,409px) scaleX(0.9833)">8523697412</span>
<span class="tx" style="font-size:14px;color:#444;transform:translate(281.29px,439px) scaleX(0.9486)">00201</span>
<span class="tx" style="font-size:14px;color:#0a84b6;transform:translate(434.37px,439px) scaleX(0.9445)">Rahul Sinha</span>
<span class="tx" style="font-size:14px;color:#444;transform:translate(591.06px,439px) scaleX(0.9484)">Class 1(A)</span>
<span class="tx" style="font-size:14px;color:#444;transform:translate(833.65px,439px) scaleX(1.0184)">02/10/2010</span>
<span class="tx" style="font-size:14px;color:#444;transform:translate(975.45px,439px) scaleX(1.0016)">Male</span>
<span class="tx" style="font-size:14px;color:#444;transform:translate(1248.24px,439px) scaleX(0.9765)">8527413690</span>
<span class="tx" style="font-size:14px;color:#444;transform:translate(281.36px,469px) scaleX(0.9719)">00213</span>
<span class="tx" style="font-size:14px;color:#0a84b6;transform:translate(434.35px,469px) scaleX(0.9521)">Devin Coinneach</span>
<span class="tx" style="font-size:14px;color:#444;transform:translate(591.06px,469px) scaleX(0.9484)">Class 1(A)</span>
<span class="tx" style="font-size:14px;color:#444;transform:translate(833.64px,469px) scaleX(0.9985)">06/25/2021</span>
<span class="tx" style="font-size:14px;color:#444;transform:translate(975.45px,469px) scaleX(1.0016)">Male</span>
<span class="tx" style="font-size:14px;color:#444;transform:translate(1248.34px,469px) scaleX(0.9970)">7411478552</span>
<span class="tx" style="font-size:14px;color:#444;transform:translate(281.37px,499px) scaleX(0.9722)">0125</span>
<span class="tx" style="font-size:14px;color:#0a84b6;transform:translate(434.15px,499px) scaleX(0.9774)">Sani Malik</span>
<span class="tx" style="font-size:14px;color:#444;transform:translate(591.06px,499px) scaleX(0.9484)">Class 1(A)</span>
<span class="tx" style="font-size:14px;color:#444;transform:translate(689.01px,499px) scaleX(1.0273)">Mohit</span>
<span class="tx" style="font-size:14px;color:#444;transform:translate(833.65px,499px) scaleX(1.0163)">06/24/2014</span>
<span class="tx" style="font-size:14px;color:#444;transform:translate(975.45px,499px) scaleX(1.0016)">Male</span>
<span class="tx" style="font-size:14px;color:#444;transform:translate(1241.09px,499px) scaleX(0.9720)">96968574556</span>
<span class="tx" style="font-size:14px;color:#444;transform:translate(282.09px,529px) scaleX(0.9262)">18001</span>
<span class="tx" style="font-size:14px;color:#0a84b6;transform:translate(434.34px,529px) scaleX(0.9600)">Edward Thomas</span>
<span class="tx" style="font-size:14px;color:#444;transform:translate(591.06px,529px) scaleX(0.9484)">Class 1(A)</span>
<span class="tx" style="font-size:14px;color:#444;transform:translate(689.47px,529px) scaleX(0.9599)">Olivier Thomas</span>
<span class="tx" style="font-size:14px;color:#444;transform:translate(833.65px,529px) scaleX(1.0327)">03/11/2014</span>
<span class="tx" style="font-size:14px;color:#444;transform:translate(975.45px,529px) scaleX(1.0016)">Male</span>
<span class="tx" style="font-size:14px;color:#444;transform:translate(1073.37px,529px) scaleX(0.9386)">General</span>
<span class="tx" style="font-size:14px;color:#444;transform:translate(1248.27px,529px) scaleX(0.9769)">8233366613</span>
<span class="tx" style="font-size:14px;color:#444;transform:translate(282.05px,559px) scaleX(0.9707)">18002</span>
<span class="tx" style="font-size:14px;color:#0a84b6;transform:translate(434.30px,559px) scaleX(0.9623)">Robin Peterson</span>
<span class="tx" style="font-size:14px;color:#444;transform:translate(591.06px,559px) scaleX(0.9484)">Class 1(A)</span>
<span class="tx" style="font-size:14px;color:#444;transform:translate(689.24px,559px) scaleX(0.9644)">Lucas Peterson</span>
<span class="tx" style="font-size:14px;color:#444;transform:translate(833.65px,559px) scaleX(1.0204)">07/12/2013</span>
<span class="tx" style="font-size:14px;color:#444;transform:translate(975.45px,559px) scaleX(1.0016)">Male</span>
<span class="tx" style="font-size:14px;color:#444;transform:translate(1073.37px,559px) scaleX(0.9386)">General</span>
<span class="tx" style="font-size:14px;color:#444;transform:translate(1240.93px,559px) scaleX(0.9687)">69898565464</span>
<span class="tx" style="font-size:14px;color:#444;transform:translate(282.06px,589px) scaleX(0.9482)">18004</span>
<span class="tx" style="font-size:14px;color:#0a84b6;transform:translate(434.33px,589px) scaleX(0.9719)">Laura Clinton</span>
<span class="tx" style="font-size:14px;color:#444;transform:translate(591.06px,589px) scaleX(0.9484)">Class 1(A)</span>
<span class="tx" style="font-size:14px;color:#444;transform:translate(689.22px,589px) scaleX(0.9806)">Michael Clinton</span>
<span class="tx" style="font-size:14px;color:#444;transform:translate(833.65px,589px) scaleX(1.0193)">07/01/2015</span>
<span class="tx" style="font-size:14px;color:#444;transform:translate(975.57px,589px) scaleX(0.9616)">Female</span>
<span class="tx" style="font-size:14px;color:#444;transform:translate(1073.37px,589px) scaleX(0.9386)">General</span>
<span class="tx" style="font-size:14px;color:#444;transform:translate(1263.74px,589px) scaleX(0.9736)">65656546</span>
<span class="tx" style="font-size:14px;color:#444;transform:translate(282.06px,619px) scaleX(0.9503)">18005</span>
<span class="tx" style="font-size:14px;color:#0a84b6;transform:translate(434.71px,619px) scaleX(0.9456)">Glen Stark</span>
<span class="tx" style="font-size:14px;color:#444;transform:translate(591.06px,619px) scaleX(0.9484)">Class 1(A)</span>
<span class="tx" style="font-size:14px;color:#444;transform:translate(689.71px,619px) scaleX(0.9671)">James Stark</span>
<span class="tx" style="font-size:14px;color:#444;transform:translate(833.65px,619px) scaleX(1.0193)">09/10/2015</span>
<span class="tx" style="font-size:14px;color:#444;transform:translate(975.45px,619px) scaleX(1.0016)">Male</span>
<span class="tx" style="font-size:14px;color:#444;transform:translate(1073.37px,619px) scaleX(0.9386)">General</span>
<span class="tx" style="font-size:14px;color:#444;transform:translate(1241.06px,619px) scaleX(0.9677)">54564645564</span>
<span class="tx" style="font-size:14px;color:#444;transform:translate(282.06px,649px) scaleX(0.9546)">18007</span>
<span class="tx" style="font-size:14px;color:#0a84b6;transform:translate(434.35px,649px) scaleX(0.9548)">Brian Kohlar</span>
<span class="tx" style="font-size:14px;color:#444;transform:translate(591.06px,649px) scaleX(0.9484)">Class 1(A)</span>
<span class="tx" style="font-size:14px;color:#444;transform:translate(689.14px,649px) scaleX(0.9674)">Nick Kohlar</span>
<span class="tx" style="font-size:14px;color:#444;transform:translate(833.65px,649px) scaleX(1.0193)">01/05/2015</span>
<span class="tx" style="font-size:14px;color:#444;transform:translate(975.45px,649px) scaleX(1.0016)">Male</span>
<span class="tx" style="font-size:14px;color:#444;transform:translate(1073.37px,649px) scaleX(0.9386)">General</span>
<span class="tx" style="font-size:14px;color:#444;transform:translate(1248.00px,649px) scaleX(0.9817)">5646546546</span>
</div>
</body>
</html>
